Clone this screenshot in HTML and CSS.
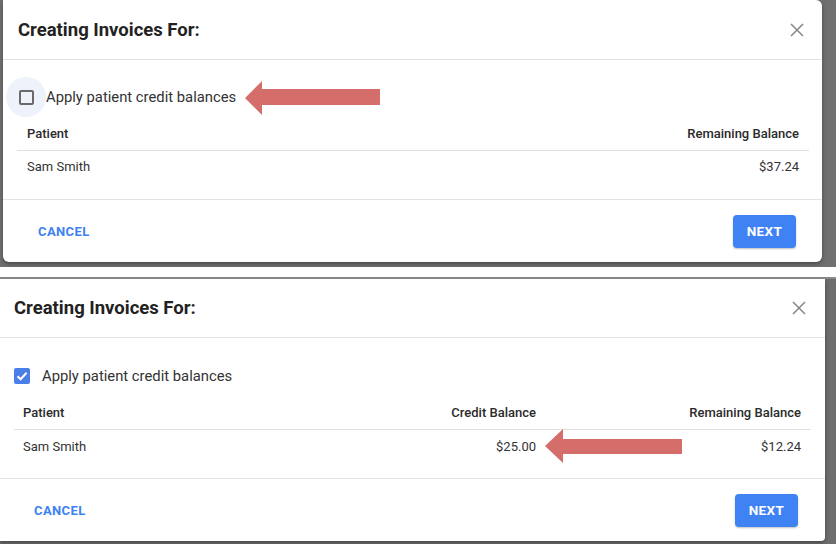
FILE: index.html
```html
<!DOCTYPE html>
<html>
<head>
<meta charset="utf-8">
<link rel="stylesheet" href="styles.css">
</head>
<body>
<div class="page">
  <section class="shot shot-one">
    <div class="dialog dialog-one">
      <header class="dlg-head">
        <h2 class="dlg-title">Creating Invoices For:</h2>
        <svg class="close" width="14" height="14" viewBox="0 0 14 14"><path d="M1 1L13 13M13 1L1 13" stroke="#8a8a8a" stroke-width="1.6" fill="none"/></svg>
      </header>
      <div class="dlg-body">
        <label class="check-row">
          <span class="halo"><span class="box"></span></span>
          <span class="check-label">Apply patient credit balances</span>
        </label>
        <div class="table">
          <div class="trow thead cols-2"><span>Patient</span><span class="num">Remaining Balance</span></div>
          <div class="trow cols-2"><span>Sam Smith</span><span class="num">$37.24</span></div>
        </div>
      </div>
      <footer class="dlg-foot">
        <span class="btn-text">CANCEL</span>
        <span class="btn-primary">NEXT</span>
      </footer>
    </div>
  </section>
  <div class="strip"></div>
  <section class="shot shot-two">
    <div class="dialog dialog-two">
      <header class="dlg-head">
        <h2 class="dlg-title">Creating Invoices For:</h2>
        <svg class="close" width="14" height="14" viewBox="0 0 14 14"><path d="M1 1L13 13M13 1L1 13" stroke="#8a8a8a" stroke-width="1.6" fill="none"/></svg>
      </header>
      <div class="dlg-body">
        <label class="check-row">
          <span class="halo plain"><span class="box checked"><svg width="16" height="16" viewBox="0 0 16 16"><path d="M3.5 8.3L6.6 11.3L12.6 4.8" stroke="#fff" stroke-width="2" fill="none"/></svg></span></span>
          <span class="check-label">Apply patient credit balances</span>
        </label>
        <div class="table">
          <div class="trow thead cols-3"><span>Patient</span><span class="num">Credit Balance</span><span class="num">Remaining Balance</span></div>
          <div class="trow cols-3"><span>Sam Smith</span><span class="num">$25.00</span><span class="num">$12.24</span></div>
        </div>
      </div>
      <footer class="dlg-foot">
        <span class="btn-text">CANCEL</span>
        <span class="btn-primary">NEXT</span>
      </footer>
    </div>
  </section>
  <svg class="arrow arrow-one" width="140" height="36" viewBox="0 0 140 36"><path d="M0 17L17 0V8H135V24H17V34Z" fill="#d56e6b"/></svg>
  <svg class="arrow arrow-two" width="140" height="36" viewBox="0 0 140 36"><path d="M0 17L18 0V10H137V25H18V34Z" fill="#d56e6b"/></svg>
</div>
</body>
</html>
```
FILE: styles.css
```css
* { box-sizing: border-box; }
html, body { margin: 0; padding: 0; }
body {
  width: 836px;
  height: 544px;
  overflow: hidden;
  background: #ffffff;
  font-family: Roboto, "Liberation Sans", Arial, sans-serif;
  color: #333;
}
.page {
  position: relative;
  width: 836px;
  height: 544px;
  display: flex;
  flex-direction: column;
}
.shot {
  display: flex;
  background: #707070;
}
.shot-one {
  height: 267px;
  padding: 0 14px 5px 3px;
}
.strip {
  height: 12px;
  background: #fff;
  border-bottom: 2px solid #8a8a8a;
}
.shot-two {
  height: 265px;
  padding: 0 11px 3px 0;
  background: #6d6d6d;
}
.dialog {
  flex: 1;
  background: #fff;
  display: flex;
  flex-direction: column;
  box-shadow: 0 2px 4px rgba(0,0,0,0.35);
}
.dialog-one { border-radius: 0 6px 6px 6px; }
.dialog-two { border-radius: 0 0 4px 0; }
.dlg-head {
  height: 60px;
  display: flex;
  align-items: center;
  justify-content: space-between;
  padding: 0 18px 0 15px;
  border-bottom: 1px solid #e3e3e3;
}
.dialog-two .dlg-head { height: 59px; padding: 0 19px 0 14px; }
.dlg-title {
  margin: 0;
  font-size: 18.5px;
  font-weight: 700;
  color: #222;
  letter-spacing: 0;
}
.close { display: block; }
.dlg-body {
  padding: 17px 13px 17px 14px;
  border-bottom: 1px solid #e3e3e3;
}
.dialog-two .dlg-body { padding: 18px 14px 16px 14px; }
.check-row {
  height: 40px;
  display: flex;
  align-items: center;
}
.halo {
  width: 40px;
  height: 40px;
  margin-left: -11px;
  border-radius: 50%;
  background: #eef3fb;
  display: flex;
  align-items: center;
  justify-content: center;
}
.halo.plain { background: transparent; margin-left: -12px; }
.box {
  width: 15px;
  height: 15px;
  border: 2px solid #6a6a6a;
  border-radius: 2px;
  display: flex;
}
.box.checked {
  width: 16px;
  height: 16px;
  border: none;
  background: #4a7fe8;
  border-radius: 2px;
}
.check-label {
  margin-left: 0;
  font-size: 14.8px;
  color: #333;
}
.table { display: flex; flex-direction: column; }
.trow {
  display: grid;
  align-items: center;
  padding: 0 10px;
  font-size: 13px;
  color: #333;
}
.cols-2 { grid-template-columns: 1fr 1fr; }
.cols-3 { grid-template-columns: 1fr 200px 265px; }
.dialog-two .trow { padding: 0 10px 0 9px; }
.thead {
  height: 34px;
  font-weight: 500;
  color: #2a2a2a;
  border-bottom: 1px solid #e0e0e0;
}
.trow:not(.thead) { height: 31px; }
.dialog-two .trow:not(.thead) { height: 32px; }
.num { text-align: right; }
.dlg-foot {
  flex: 1;
  display: flex;
  align-items: center;
  justify-content: space-between;
  padding: 0 26px 0 35px;
}
.dialog-two .dlg-foot { padding: 0 27px 0 34px; }
.btn-text {
  font-size: 13px;
  font-weight: 700;
  color: #3c82f0;
  letter-spacing: 0.4px;
}
.btn-primary {
  width: 63px;
  height: 33px;
  display: flex;
  align-items: center;
  justify-content: center;
  background: #3f82f4;
  color: #fff;
  border-radius: 4px;
  font-size: 13.5px;
  font-weight: 700;
  letter-spacing: 0.4px;
  box-shadow: 0 1px 2px rgba(0,0,0,0.25);
}
.arrow { position: absolute; display: block; }
.arrow-one { left: 245px; top: 81px; }
.arrow-two { left: 545px; top: 429px; }
```
